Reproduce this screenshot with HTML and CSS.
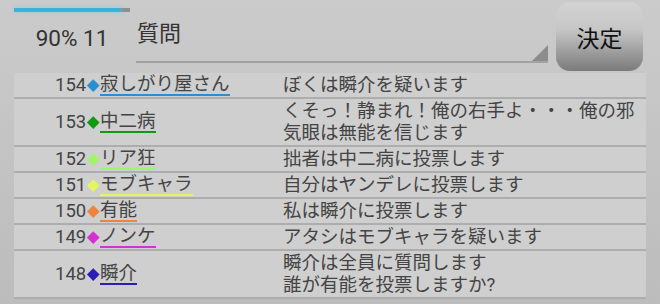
FILE: index.html
```html
<!DOCTYPE html>
<html lang="ja">
<head>
  <meta charset="UTF-8">
  <meta name="viewport" content="width=device-width, initial-scale=1.0">
  <title>投票ログ</title>
  <link rel="stylesheet" href="styles.css">
</head>
<body>
  <div class="screen">
    <div class="top">
      <div class="status">
        <div class="progress"><div class="progress-fill" style="width: 91%"></div></div>
        <div class="status-text">90% 11</div>
      </div>
      <div class="question">
        <span class="question-label">質問</span>
      </div>
      <button class="decide">決定</button>
    </div>

    <ul class="log">
      <li class="row blue">
        <div class="who"><span class="num">154</span><span class="mark"></span><span class="name">寂しがり屋さん</span></div>
        <div class="msg">ぼくは瞬介を疑います</div>
      </li>
      <li class="row green">
        <div class="who"><span class="num">153</span><span class="mark"></span><span class="name">中二病</span></div>
        <div class="msg">くそっ！静まれ！俺の右手よ・・・俺の邪<br>気眼は無能を信じます</div>
      </li>
      <li class="row lime">
        <div class="who"><span class="num">152</span><span class="mark"></span><span class="name">リア狂</span></div>
        <div class="msg">拙者は中二病に投票します</div>
      </li>
      <li class="row yellow">
        <div class="who"><span class="num">151</span><span class="mark"></span><span class="name">モブキャラ</span></div>
        <div class="msg">自分はヤンデレに投票します</div>
      </li>
      <li class="row orange">
        <div class="who"><span class="num">150</span><span class="mark"></span><span class="name">有能</span></div>
        <div class="msg">私は瞬介に投票します</div>
      </li>
      <li class="row magenta">
        <div class="who"><span class="num">149</span><span class="mark"></span><span class="name">ノンケ</span></div>
        <div class="msg">アタシはモブキャラを疑います</div>
      </li>
      <li class="row indigo">
        <div class="who"><span class="num">148</span><span class="mark"></span><span class="name">瞬介</span></div>
        <div class="msg">瞬介は全員に質問します<br>誰が有能を投票しますか?</div>
      </li>
    </ul>
  </div>
</body>
</html>
```

FILE: styles.css
```css
body {
  margin: 0;
  width: 660px;
  height: 304px;
  overflow: hidden;
  font-family: Roboto, "Noto Sans CJK JP", sans-serif;
  background: linear-gradient(#cbcbcb, #bcbcbc);
  color: #444;
}
.screen {
  display: flex;
  flex-direction: column;
}

/* top bar */
.top {
  display: flex;
  height: 73px;
}
.status {
  width: 136px;
  padding-left: 14px;
  box-sizing: border-box;
}
.progress {
  margin-top: 8px;
  width: 116px;
  height: 4px;
  background: #8f8f8f;
}
.progress-fill {
  height: 100%;
  background: #3ab2de;
  box-shadow: 2px 0 4px rgba(80, 200, 240, 0.5);
}
.status-text {
  margin-top: 13px;
  width: 116px;
  text-align: center;
  font-size: 22.5px;
  line-height: 26px;
  color: #333;
}
.question {
  position: relative;
  flex: 1;
  height: 63px;
  box-sizing: border-box;
  padding: 22px 0 0 1px;
  border-bottom: 2px solid #a2a2a2;
}
.question::after {
  content: "";
  position: absolute;
  right: 0;
  bottom: 0;
  width: 16px;
  height: 16px;
  background: #8c8c8c;
  clip-path: polygon(100% 0, 100% 100%, 0 100%);
}
.question-label {
  font-size: 22px;
  line-height: 24px;
  color: #333;
}
.decide {
  margin: 2px 17px 0 8px;
  width: 87px;
  height: 69px;
  border: none;
  border-radius: 14px;
  background: linear-gradient(#d3d3d3 0%, #c6c6c6 40%, #7b7b7b 100%);
  font-family: "Noto Sans CJK JP", sans-serif;
  font-size: 23px;
  color: #111;
  padding: 0;
}

/* log list */
.log {
  list-style: none;
  margin: 0 14px;
  padding: 0;
  background: #cfcfcf;
}
.row {
  display: flex;
  align-items: center;
  padding: 1px 0;
  border-bottom: 2px solid #adadad;
  font-size: 18.5px;
  line-height: 22px;
  --mark: transparent;
}
.who {
  display: flex;
  align-items: center;
  width: 269px;
  padding-left: 41px;
  box-sizing: border-box;
}
.num {
  width: 32px;
}
.mark {
  width: 13px;
  height: 13px;
  display: flex;
  align-items: center;
  justify-content: center;
}
.mark::before {
  content: "";
  width: 8.5px;
  height: 8.5px;
  background: var(--mark);
  transform: rotate(45deg);
}
.name {
  line-height: 20px;
  border-bottom: 2px solid var(--mark);
}
.msg {
  flex: 1;
  min-height: 22px;
}

.blue { --mark: #2a8ed2; }
.green { --mark: #0f9a12; }
.lime { --mark: #a2f46a; }
.yellow { --mark: #e4f462; }
.orange { --mark: #f0843e; }
.magenta { --mark: #d232d0; }
.indigo { --mark: #2c20b4; }
```
